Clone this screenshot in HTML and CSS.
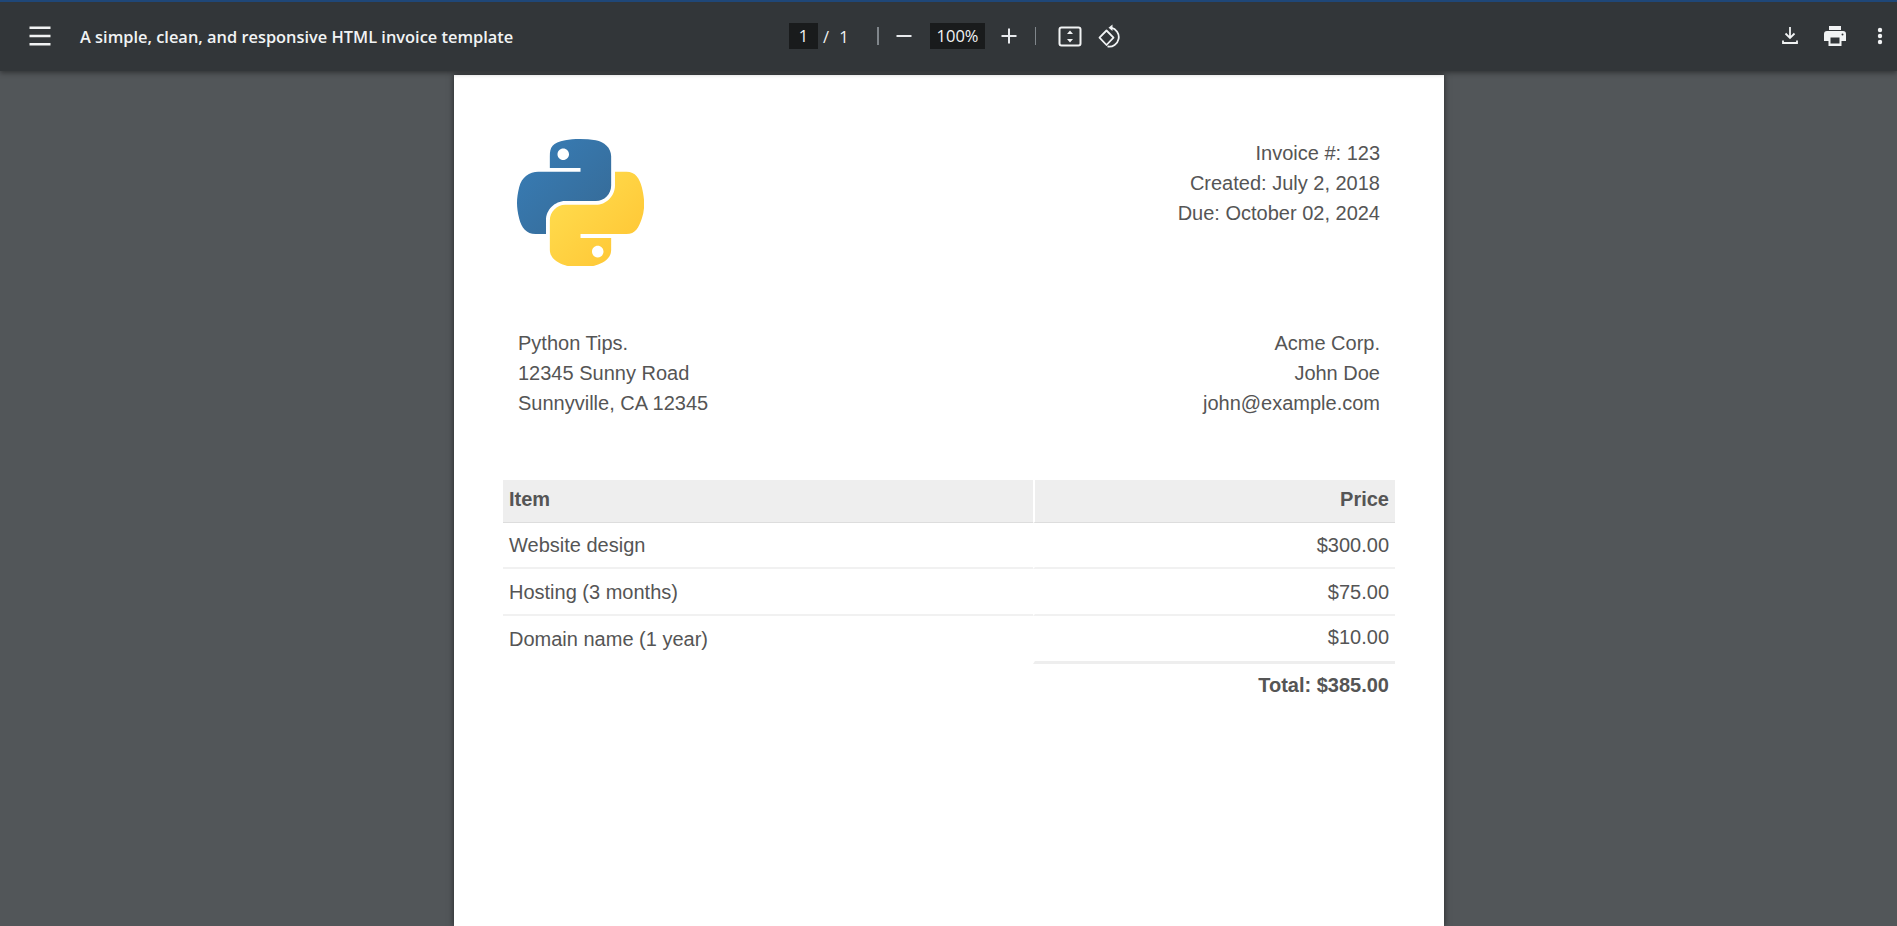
FILE: index.html
```html
<!DOCTYPE html>
<html lang="en">
<head>
<meta charset="utf-8">
<title>A simple, clean, and responsive HTML invoice template</title>
<link rel="stylesheet" href="styles.css">
</head>
<body>
<header class="toolbar">
  <div class="tb-left">
    <svg class="icon menu" width="24" height="24" viewBox="0 0 24 24"><path d="M1.500 3.700h21M1.500 12h21M1.500 20.300h21" stroke="#f1f3f4" stroke-width="2.600" fill="none"/></svg>
    <span class="doc-title">A simple, clean, and responsive HTML invoice template</span>
  </div>
  <div class="tb-center">
    <span class="num-box page-box">1</span>
    <span class="slash">/</span>
    <span class="page-total">1</span>
    <span class="sep sep-a"></span>
    <svg class="icon minus" width="18" height="18" viewBox="0 0 18 18"><path d="M1.500 9h15" stroke="#e8eaed" stroke-width="2" fill="none"/></svg>
    <span class="num-box zoom-box">100%</span>
    <svg class="icon plus" width="18" height="18" viewBox="0 0 18 18"><path d="M1.500 9h15M9 1.500v15" stroke="#e8eaed" stroke-width="2" fill="none"/></svg>
    <span class="sep sep-b"></span>
    <svg class="icon fit" width="24" height="21" viewBox="0 0 24 21"><rect x="1.500" y="1.500" width="21" height="18" rx="2" stroke="#f1f3f4" stroke-width="2" fill="none"/><path d="M12 4.500l3 3.500H9zM12 16.500l3-3.500H9z" fill="#f1f3f4"/></svg>
    <svg class="icon rotate" width="24" height="24" viewBox="0 0 24 24"><path d="M8.500 6.500l-7 7.200 7 7.300 7-7.300z" stroke="#f1f3f4" stroke-width="1.800" fill="none" stroke-linejoin="round"/><path d="M13 3.700A9.500 9.500 0 1 1 9.500 22.400" stroke="#f1f3f4" stroke-width="1.800" fill="none"/><path d="M14.500 0.500v6.400L10.500 3.700z" fill="#f1f3f4"/></svg>
  </div>
  <div class="tb-right">
    <svg class="icon download" width="16" height="18" viewBox="0 0 16 18"><path d="M8 0v10.500M3.500 6.500L8 11l4.500-4.500M1 13.500v2.500h14v-2.500" stroke="#f1f3f4" stroke-width="1.800" fill="none"/></svg>
    <svg class="icon print" width="22" height="20" viewBox="0 0 22 20"><path d="M5 0h12v4H5zM3 5h16a3 3 0 0 1 3 3v7h-4.500v5h-13v-5H0V8a3 3 0 0 1 3-3zM6.500 11.500v6h9v-6z" fill="#f1f3f4" fill-rule="evenodd"/><circle cx="18.500" cy="8.500" r="1" fill="#323639"/></svg>
    <svg class="icon dots" width="6" height="18" viewBox="0 0 6 18"><circle cx="3" cy="3" r="2.200" fill="#f1f3f4"/><circle cx="3" cy="9" r="2.200" fill="#f1f3f4"/><circle cx="3" cy="15" r="2.200" fill="#f1f3f4"/></svg>
  </div>
</header>
<main class="viewer">
  <article class="sheet">
    <section class="top-row">
      <svg class="logo" width="127" height="127" viewBox="0 0 111 111">
        <defs>
          <linearGradient id="py-blue" x1="0" y1="0" x2="1" y2="1"><stop offset="0" stop-color="#387eb8"/><stop offset="1" stop-color="#366994"/></linearGradient>
          <linearGradient id="py-yellow" x1="0" y1="0" x2="1" y2="1"><stop offset="0" stop-color="#ffe052"/><stop offset="1" stop-color="#ffc331"/></linearGradient>
        </defs>
        <path fill="url(#py-blue)" d="M54.919 0.001c-4.584.022-8.961.413-12.812 1.095C30.760 3.100 28.700 7.295 28.700 15.032v10.219h26.812v3.406H18.638c-7.792 0-14.616 4.684-16.750 13.594-2.462 10.213-2.571 16.586 0 27.250 1.906 7.938 6.458 13.594 14.250 13.594h9.219v-12.250c0-8.850 7.657-16.656 16.750-16.656h26.781c7.455 0 13.406-6.138 13.406-13.625v-25.531c0-7.266-6.130-12.725-13.406-13.938C64.282.328 59.502-.020 54.918.001zM40.419 8.220c2.770 0 5.031 2.299 5.031 5.125 0 2.816-2.262 5.094-5.031 5.094-2.780 0-5.031-2.278-5.031-5.094 0-2.826 2.252-5.125 5.031-5.125z"/>
        <path fill="url(#py-yellow)" d="M85.638 28.657v11.906c0 9.231-7.826 17-16.750 17H42.107c-7.336 0-13.406 6.278-13.406 13.625v25.531c0 7.266 6.319 11.540 13.406 13.625 8.487 2.496 16.626 2.947 26.781 0 6.750-1.954 13.406-5.888 13.406-13.625V86.500H55.513v-3.405H95.700c7.793 0 10.696-5.436 13.406-13.594 2.800-8.399 2.680-16.476 0-27.250-1.926-7.757-5.604-13.594-13.406-13.594H85.638zM70.575 93.313c2.780 0 5.031 2.278 5.031 5.094 0 2.826-2.252 5.125-5.031 5.125-2.770 0-5.031-2.299-5.031-5.125 0-2.816 2.262-5.094 5.031-5.094z"/>
      </svg>
      <div class="meta">Invoice #: 123<br>Created: July 2, 2018<br>Due: October 02, 2024</div>
    </section>
    <section class="parties">
      <div>Python Tips.<br>12345 Sunny Road<br>Sunnyville, CA 12345</div>
      <div class="right">Acme Corp.<br>John Doe<br>john@example.com</div>
    </section>
    <table class="items">
      <colgroup><col class="col-item"><col></colgroup>
      <thead>
        <tr><th class="cell-l">Item</th><th class="cell-r">Price</th></tr>
      </thead>
      <tbody>
        <tr class="row-a"><td class="cell-l">Website design</td><td class="cell-r">$300.00</td></tr>
        <tr class="row-b"><td class="cell-l">Hosting (3 months)</td><td class="cell-r">$75.00</td></tr>
        <tr class="row-c"><td class="no-line cell-l">Domain name (1 year)</td><td class="no-line cell-r">$10.00</td></tr>
        <tr class="row-total"><td class="cell-l"></td><td class="total cell-r">Total: $385.00</td></tr>
      </tbody>
    </table>
  </article>
</main>
</body>
</html>
```

FILE: styles.css
```css
* { box-sizing: border-box; }
html, body { height: 100%; }
body {
  margin: 0;
  display: flex;
  flex-direction: column;
  overflow: hidden;
  background: #525659;
  font-family: "Liberation Sans", Arial, sans-serif;
}
.toolbar {
  flex: 0 0 71px;
  position: relative;
  z-index: 2;
  display: flex;
  align-items: center;
  background: #323639;
  border-top: 2px solid #1f4778;
  color: #f1f3f4;
  box-shadow: 0 2px 5px rgba(0, 0, 0, 0.4);
  padding-bottom: 1px;
}
.icon { display: block; flex: none; }
.tb-left {
  flex: 0 0 789px;
  display: flex;
  align-items: center;
  padding-left: 28px;
}
.doc-title {
  margin-left: 28px;
  font: 600 16.4px "Open Sans", sans-serif;
  white-space: nowrap;
}
.tb-center {
  display: flex;
  align-items: center;
  font: 400 16.5px "Open Sans", sans-serif;
}
.num-box {
  height: 26px;
  line-height: 26px;
  text-align: center;
  background: #191b1c;
  color: #f1f3f4;
}
.page-box { width: 29px; }
.slash { margin-left: 3px; width: 10px; text-align: center; }
.page-total { margin-left: 8px; width: 10px; text-align: center; }
.sep { display: block; height: 18px; background: #80868b; }
.sep-a { margin-left: 28px; width: 2px; }
.sep-b { margin-left: 17px; width: 1px; }
.minus { margin-left: 16px; }
.zoom-box { width: 55px; margin-left: 17px; }
.plus { margin-left: 15px; }
.fit { margin-left: 22px; }
.rotate { margin-left: 16px; }
.tb-right {
  margin-left: auto;
  display: flex;
  align-items: center;
  padding-right: 14px;
}
.print { margin-left: 26px; }
.dots { margin-left: 31px; }
.viewer {
  flex: 1;
  min-height: 0;
  display: flex;
  justify-content: center;
  padding: 4px 0 0 1px;
}
.sheet {
  width: 990px;
  flex: none;
  height: 100%;
  background: #fff;
  color: #555;
  box-shadow: 0 0 6px rgba(0, 0, 0, 0.55);
  padding: 64px 49px 0 49px;
  font-size: 20px;
  line-height: 30px;
}
.top-row {
  display: flex;
  justify-content: space-between;
  align-items: flex-start;
  padding: 0 15px 0 14px;
}
.logo { display: block; }
.meta { text-align: right; margin-top: -1px; }
.parties {
  display: flex;
  justify-content: space-between;
  padding: 0 15px;
  margin-top: 62px;
}
.right { text-align: right; }
.items {
  width: 892px;
  margin-top: 62px;
  border-collapse: separate;
  border-spacing: 0;
  table-layout: fixed;
}
.col-item { width: 530px; }
th, td { padding: 0 6px; }
.cell-l { text-align: left; }
.cell-r { text-align: right; border-left: 2px solid #fff; }
th {
  height: 43px;
  padding-bottom: 4px;
  background: #eee;
  border-bottom: 1px solid #ddd;
  font-weight: 700;
}
td { border-bottom: 2px solid #f1f1f1; }
.row-a td { height: 46px; }
.row-b td { height: 47px; }
.row-c td { height: 48px; padding-bottom: 3px; }
td.no-line { border-bottom: 0; }
.row-c td.cell-r { border-bottom: 3px solid #eee; }
.row-total td { height: 46px; border-bottom: 0; padding-bottom: 4px; }
.total { font-weight: 700; }
```
